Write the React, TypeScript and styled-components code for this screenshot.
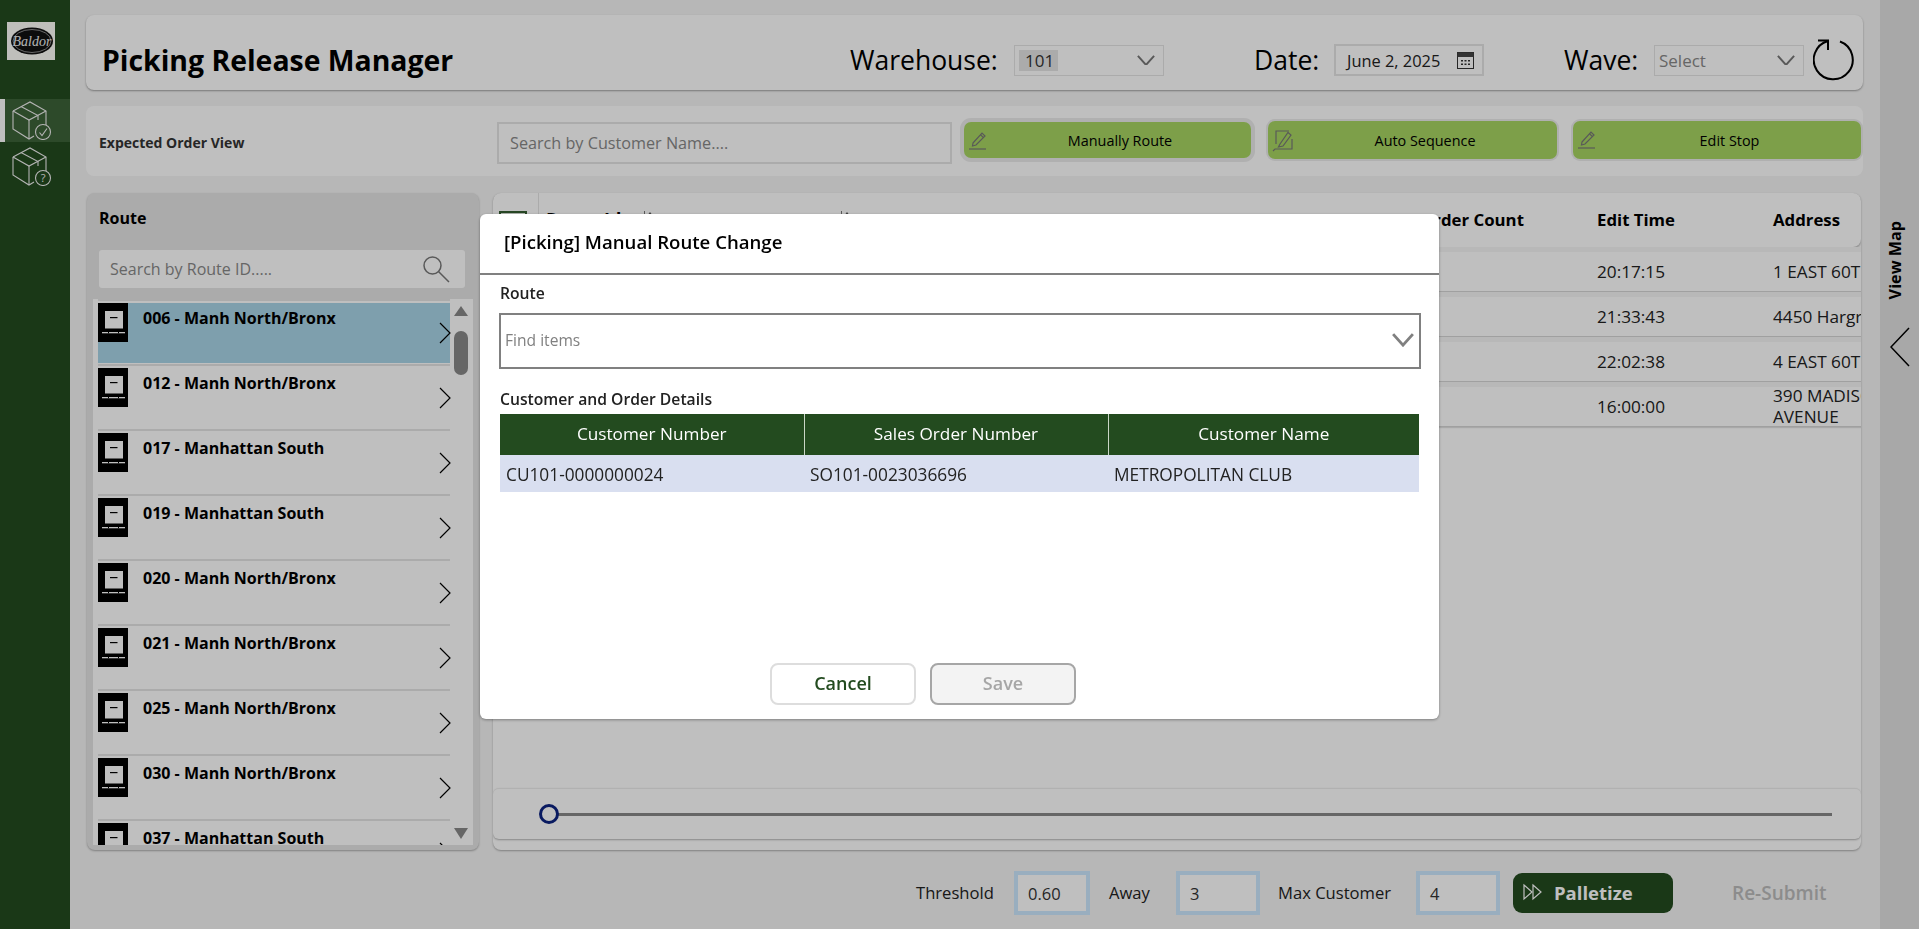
import React from 'react';
import styled, { createGlobalStyle } from 'styled-components';

const GlobalStyle = createGlobalStyle`
  html, body {
    margin: 0;
    padding: 0;
    height: 100%;
    overflow: hidden;
    font-family: 'Open Sans', 'Liberation Sans', sans-serif;
  }
  * { box-sizing: border-box; }
`;

const routes = [
  '006 - Manh North/Bronx',
  '012 - Manh North/Bronx',
  '017 - Manhattan South',
  '019 - Manhattan South',
  '020 - Manh North/Bronx',
  '021 - Manh North/Bronx',
  '025 - Manh North/Bronx',
  '030 - Manh North/Bronx',
  '037 - Manhattan South',
];

const stops = [
  { time: '20:17:15', address: '1 EAST 60TH STREET' },
  { time: '21:33:43', address: '4450 Hargrove Road' },
  { time: '22:02:38', address: '4 EAST 60TH STREET' },
  { time: '16:00:00', address: '390 MADISON AVENUE' },
];

const BoxIcon = ({ badge }: { badge: 'check' | 'help' }) => (
  <svg width="42" height="40" viewBox="0 0 42 40" fill="none" stroke="#f0f0f0" strokeWidth="1.1">
    <path d="M1 11 L18 2 L34 11 V25" />
    <path d="M1 11 V29 L17 39 L22 36" />
    <path d="M1 11 L17 20 L34 11" />
    <path d="M17 20 V39" />
    <path d="M9 6.5 L26 15.5 V20" />
    <circle cx="31" cy="32" r="7.5" />
    {badge === 'check' ? (
      <path d="M27.5 32.5 L30 35.5 L35 28.5" />
    ) : (
      <text x="31" y="36" fontSize="11" textAnchor="middle" fill="#f0f0f0" stroke="none" fontFamily="'Open Sans', sans-serif">?</text>
    )}
  </svg>
);

const PalletIcon = () => (
  <svg width="30" height="39" viewBox="0 0 30 39">
    <rect width="30" height="39" fill="#000" />
    <rect x="7" y="8" width="18" height="17.5" fill="#fff" />
    <rect x="12" y="14" width="7.5" height="1.2" fill="#000" />
    <rect x="4" y="29" width="23" height="1.3" fill="#fff" />
    <rect x="10" y="29" width="1" height="1.3" fill="#000" />
    <rect x="20" y="29" width="1" height="1.3" fill="#000" />
  </svg>
);

const Chevron = ({ size = 14, color = '#777', weight = 2.2 }: { size?: number; color?: string; weight?: number }) => (
  <svg width={size} height={size * 0.6} viewBox="0 0 20 12" fill="none" stroke={color} strokeWidth={weight}>
    <path d="M1 1 L10 11 L19 1" />
  </svg>
);

const PencilIcon = () => (
  <svg width="20" height="20" viewBox="0 0 20 20" fill="none" stroke="#777" strokeWidth="1.2">
    <path d="M5 13 L14 3 L17 6 L8 15 L4.5 16 Z" />
    <path d="M12.5 4.8 L15.5 7.6" />
    <path d="M1 19 H18" />
  </svg>
);

const SequenceIcon = () => (
  <svg width="22" height="24" viewBox="0 0 22 24" fill="none" stroke="#777" strokeWidth="1.2">
    <path d="M4 15 V2 H17" />
    <path d="M8 15 L16 3.5 L19 6 L11 17 L6.5 18 Z" />
    <path d="M20 10 V20 H3 L1 22" />
  </svg>
);

const Page = styled.div`
  display: flex;
  width: 100vw;
  height: 100vh;
  background: #f4f4f4;
  overflow: hidden;
`;

const Sidebar = styled.aside`
  width: 70px;
  flex: none;
  background: #234b1f;
  padding-top: 22px;
`;

const LogoBox = styled.div`
  width: 48px;
  height: 38px;
  margin: 0 0 39px 7px;
  background: #fffffa;
`;

const NavItem = styled.div<{ $active?: boolean }>`
  height: 43px;
  padding-top: 1px;
  padding-left: ${p => (p.$active ? '7px' : '12px')};
  background: ${p => (p.$active ? '#3d6338' : 'transparent')};
  border-left: ${p => (p.$active ? '5px solid #ffffff' : 'none')};
  margin-bottom: ${p => (p.$active ? '3px' : '0')};
`;

const Main = styled.main`
  flex: 1;
  min-width: 0;
  padding: 15px 17px 0 16px;
`;

const Card = styled.section`
  background: #ffffff;
  border-radius: 8px;
`;

const HeaderCard = styled(Card)`
  display: flex;
  align-items: center;
  height: 75px;
  padding: 15px 0 0 16px;
  box-shadow: 0 1px 2px rgba(0, 0, 0, 0.35);
`;

const Title = styled.h1`
  width: 748px;
  margin: 0;
  font-size: 28.4px;
  line-height: 38px;
  font-weight: 700;
  color: #000;
`;

const FieldLabel = styled.span<{ $width: number }>`
  width: ${p => p.$width}px;
  font-size: 26.5px;
  font-weight: 500;
  color: #000;
`;

const SelectBox = styled.div<{ $gap: number }>`
  display: flex;
  align-items: center;
  justify-content: space-between;
  width: 150px;
  height: 31px;
  margin-right: ${p => p.$gap}px;
  padding: 0 8px 0 4px;
  border: 1px solid #e4e4e4;
  font-size: 17px;
  color: #888;
`;

const SelectedChip = styled.span`
  width: 39px;
  height: 21px;
  padding-left: 6px;
  line-height: 21px;
  background: #e4e4e4;
  color: #333;
`;

const DateBox = styled.div`
  display: flex;
  align-items: center;
  justify-content: space-between;
  width: 150px;
  height: 32px;
  margin-right: 80px;
  padding: 0 8px 0 11px;
  border: 2px solid #e4e4e4;
  font-size: 16.4px;
  color: #222;
`;

const ToolbarCard = styled(Card)`
  display: flex;
  align-items: center;
  height: 70px;
  margin-top: 16px;
  padding-left: 13px;
`;

const ToolbarTitle = styled.span`
  width: 398px;
  margin-top: 2px;
  font-size: 14px;
  font-weight: 700;
  color: #333;
`;

const CustomerSearch = styled.div`
  width: 455px;
  height: 42px;
  margin-top: 4px;
  padding-left: 11px;
  border: 2px solid #e4e4e4;
  font-size: 16.2px;
  line-height: 38px;
  color: #888;
`;

const ActionButton = styled.button<{ $ring: number; $left: number; $width: number; $height: number }>`
  position: relative;
  width: ${p => p.$width}px;
  height: ${p => p.$height}px;
  margin: -2px 0 0 ${p => p.$left}px;
  padding: 0 0 0 25px;
  background: #a7d562;
  border: none;
  border-radius: 7px;
  box-shadow: 0 0 0 ${p => p.$ring}px #ebebeb;
  font-family: inherit;
  font-size: 14.4px;
  font-weight: 500;
  color: #000;
  svg {
    position: absolute;
    left: 4px;
    top: 8px;
  }
`;

const ContentRow = styled.div`
  display: flex;
  gap: 14px;
  height: 657px;
  margin: 17px 2px 0 0;
`;

const RoutePanel = styled.section`
  width: 392px;
  margin-left: 1px;
  flex: none;
  background: #e4e4e4;
  border-radius: 8px;
  box-shadow: 0 1px 2px rgba(0, 0, 0, 0.3);
`;

const RouteTitle = styled.div`
  height: 57px;
  padding: 14px 0 0 12px;
  font-size: 16px;
  line-height: 22px;
  font-weight: 700;
  color: #000;
`;

const RouteSearch = styled.div`
  display: flex;
  align-items: center;
  justify-content: space-between;
  width: 366px;
  height: 38px;
  margin-left: 12px;
  padding: 0 15px 0 11px;
  background: #ffffff;
  border-radius: 3px;
  font-size: 16px;
  color: #888;
`;

const RouteListFrame = styled.div`
  display: flex;
  width: 380px;
  height: 546px;
  margin: 11px 0 0 6px;
  padding-left: 5px;
  background: #ffffff;
  overflow: hidden;
`;

const RouteList = styled.div`
  width: 352px;
  flex: none;
`;

const RouteItem = styled.div`
  padding-top: 2px;
  margin-bottom: 1px;
  border-top: 2px solid #e4e4e4;
`;

const RouteBody = styled.div<{ $active?: boolean }>`
  position: relative;
  display: flex;
  height: 60px;
  background: ${p => (p.$active ? '#a9d5e7' : 'transparent')};
  svg:first-child { flex: none; }
  > svg:last-child {
    position: absolute;
    right: -1px;
    top: 19px;
  }
`;

const RouteName = styled.span`
  margin: 4px 0 0 15px;
  font-size: 16px;
  line-height: 22px;
  font-weight: 700;
  color: #000;
`;

const ScrollTrack = styled.div`
  position: relative;
  width: 24px;
  flex: none;
`;

const ScrollArrow = styled.div<{ $down?: boolean }>`
  position: absolute;
  left: 4px;
  top: ${p => (p.$down ? '529px' : '7px')};
  width: 0;
  height: 0;
  border-left: 7.5px solid transparent;
  border-right: 7.5px solid transparent;
  border-bottom: ${p => (p.$down ? 'none' : '10px solid #888')};
  border-top: ${p => (p.$down ? '11px solid #888' : 'none')};
`;

const ScrollThumb = styled.div`
  position: absolute;
  left: 4px;
  top: 32px;
  width: 14px;
  height: 44px;
  border-radius: 7px;
  background: #888;
`;

const GridPanel = styled.section`
  position: relative;
  flex: 1;
  min-width: 0;
  background: #ffffff;
  border-radius: 8px;
  box-shadow: 0 1px 2px rgba(0, 0, 0, 0.3);
  overflow: hidden;
`;

const GridHeader = styled.div`
  position: relative;
  height: 54px;
  background: #ffffff;
  border-radius: 8px;
  box-shadow: 0 1px 3px rgba(0, 0, 0, 0.4);
  font-weight: 700;
  color: #000;
`;

const HeaderCheck = styled.div`
  position: absolute;
  left: 6px;
  top: 18px;
  width: 28px;
  height: 28px;
  border: 2px solid #345e30;
  background: #e9f0e8;
`;

const HeaderDivider = styled.div`
  position: absolute;
  left: 45px;
  top: 0;
  bottom: 0;
  width: 1px;
  background: #e4e4e4;
`;

const HeaderCell = styled.span<{ $left: number; $large?: boolean }>`
  position: absolute;
  left: ${p => p.$left}px;
  top: ${p => (p.$large ? '15px' : '16px')};
  font-size: ${p => (p.$large ? '18px' : '16.8px')};
  line-height: 22px;
  white-space: nowrap;
`;

const SortMark = styled.span<{ $left: number }>`
  position: absolute;
  left: ${p => p.$left}px;
  top: 18px;
  width: 8px;
  height: 10px;
  border-left: 1px solid #777;
  &::after {
    content: '';
    position: absolute;
    left: 2px;
    top: 1px;
    border-left: 3px solid transparent;
    border-right: 3px solid transparent;
    border-bottom: 4px solid #555;
  }
`;

const GridRow = styled.div`
  position: relative;
  height: 45px;
  border-top: 5px solid #f6f6f6;
  border-bottom: 1px solid #d6d6d6;
  box-shadow: 0 1px 1px rgba(0, 0, 0, 0.12);
  font-size: 17.2px;
  color: #222;
`;

const TimeCell = styled.span`
  position: absolute;
  left: 1104px;
  top: 9px;
  line-height: 22px;
`;

const AddressCell = styled.span<{ $wrapped?: boolean }>`
  position: absolute;
  left: 1280px;
  top: ${p => (p.$wrapped ? '-2px' : '9px')};
  width: 120px;
  line-height: ${p => (p.$wrapped ? '21px' : '22px')};
  white-space: ${p => (p.$wrapped ? 'normal' : 'nowrap')};
`;

const SliderPanel = styled.div`
  position: absolute;
  left: 0;
  right: 0;
  top: 595px;
  height: 51px;
  background: #ffffff;
  border-top: 1px solid #ececec;
  border-radius: 6px;
  box-shadow: 0 1px 2px rgba(0, 0, 0, 0.3);
`;

const SliderTrack = styled.div`
  position: absolute;
  left: 55px;
  right: 29px;
  top: 24px;
  height: 3px;
  background: #888;
`;

const SliderThumb = styled.div`
  position: absolute;
  left: 46px;
  top: 15px;
  width: 20px;
  height: 20px;
  border: 3px solid #0d2380;
  border-radius: 50%;
  background: #ffffff;
`;

const BottomBar = styled.div`
  display: flex;
  align-items: center;
  height: 44px;
  margin-top: 21px;
  padding-left: 830px;
  color: #222;
`;

const BottomLabel = styled.span<{ $left?: number; $width: number }>`
  width: ${p => p.$width}px;
  margin: -2px 0 0 ${p => p.$left ?? 0}px;
  font-size: 16.6px;
  font-weight: 500;
`;

const NumberBox = styled.div<{ $width: number }>`
  width: ${p => p.$width}px;
  height: 44px;
  padding-left: 10px;
  border: 4px solid #cde9ff;
  background: #ffffff;
  font-size: 16.5px;
  line-height: 38px;
  color: #333;
`;

const PalletizeButton = styled.button`
  display: flex;
  align-items: center;
  width: 160px;
  height: 40px;
  margin-left: 13px;
  padding: 0 0 2px 10px;
  background: #234b1f;
  border: none;
  border-radius: 9px;
  font-family: inherit;
  font-size: 18.5px;
  font-weight: 700;
  color: #ffffff;
  svg { margin-right: 11px; }
`;

const ResubmitButton = styled.button`
  margin-left: 59px;
  padding: 0;
  background: none;
  border: none;
  font-family: inherit;
  font-size: 19px;
  font-weight: 600;
  color: #bbb;
`;

const MapStrip = styled.aside`
  display: flex;
  flex-direction: column;
  align-items: center;
  width: 39px;
  flex: none;
  padding-top: 221px;
  background: #e1e1e1;
`;

const MapLabel = styled.span`
  margin-right: 10px;
  writing-mode: vertical-rl;
  transform: rotate(180deg);
  font-size: 16.2px;
  line-height: 20px;
  font-weight: 700;
  color: #000;
`;

const MapArrow = styled.div`
  margin: 28px 0 0 1px;
`;

const Overlay = styled.div`
  position: fixed;
  inset: 0;
  background: rgba(0, 0, 0, 0.25);
`;

const Modal = styled.div`
  position: fixed;
  left: 480px;
  top: 214px;
  width: 959px;
  height: 505px;
  background: #ffffff;
  border-radius: 6px;
  box-shadow: 0 1px 3px rgba(0, 0, 0, 0.35);
`;

const ModalTitle = styled.div`
  height: 61px;
  padding: 16px 0 0 24px;
  border-bottom: 2px solid #808080;
  font-size: 18.6px;
  line-height: 24px;
  font-weight: 600;
  color: #000;
`;

const ModalLabel = styled.div<{ $top: number }>`
  margin: ${p => p.$top}px 0 0 20px;
  font-size: 15.7px;
  line-height: 22px;
  font-weight: 600;
  color: #222;
`;

const RouteCombo = styled.div`
  display: flex;
  align-items: center;
  justify-content: space-between;
  width: 922px;
  height: 56px;
  margin: 9px 0 0 19px;
  padding: 0 5px 2px 4px;
  border: 2px solid #808080;
  font-size: 15.6px;
  color: #808080;
`;

const DetailsTable = styled.table`
  width: 919px;
  margin: 4px 0 0 20px;
  border-collapse: collapse;
  table-layout: fixed;
  font-size: 17.3px;
  th {
    height: 41px;
    padding: 0 0 2px;
    background: #234b1f;
    border-right: 1px solid #c9d6c6;
    font-size: 17.2px;
    font-weight: 500;
    color: #ffffff;
  }
  th:nth-child(1), th:nth-child(2) { width: 304px; }
  th:last-child { border-right: none; }
  td {
    height: 37px;
    padding: 2px 0 0 6px;
    background: #d9dff0;
    color: #222;
  }
`;

const ModalActions = styled.div`
  position: absolute;
  left: 290px;
  top: 449px;
  display: flex;
  gap: 14px;
`;

const ModalButton = styled.button<{ $disabled?: boolean }>`
  width: 146px;
  height: 42px;
  padding: 0 0 3px;
  background: ${p => (p.$disabled ? '#f3f3f3' : '#ffffff')};
  border: 2px solid ${p => (p.$disabled ? '#a6a6a6' : '#dddddd')};
  border-radius: 8px;
  font-family: inherit;
  font-size: 18px;
  font-weight: 600;
  color: ${p => (p.$disabled ? '#a6a6a6' : '#234b1f')};
`;

const App = () => {
  return (
    <>
      <GlobalStyle />
      <Page>
        <Sidebar>
          <LogoBox>
            <svg width="48" height="38" viewBox="0 0 48 38">
              <ellipse cx="25" cy="19" rx="21" ry="13.5" fill="#111" />
              <ellipse cx="25" cy="19" rx="19" ry="11.5" fill="none" stroke="#ddd" strokeWidth="0.6" />
              <text x="25" y="23.5" textAnchor="middle" fontSize="14" fontStyle="italic" fill="#eee" fontFamily="'Liberation Serif', serif">Baldor</text>
            </svg>
          </LogoBox>
          <NavItem $active><BoxIcon badge="check" /></NavItem>
          <NavItem><BoxIcon badge="help" /></NavItem>
        </Sidebar>

        <Main>
          <HeaderCard>
            <Title>Picking Release Manager</Title>
            <FieldLabel $width={164}>Warehouse:</FieldLabel>
            <SelectBox $gap={90}>
              <SelectedChip>101</SelectedChip>
              <Chevron size={18} />
            </SelectBox>
            <FieldLabel $width={80}>Date:</FieldLabel>
            <DateBox>
              June 2, 2025
              <svg width="17" height="17" viewBox="0 0 17 17">
                <rect x="0.5" y="0.5" width="16" height="16" fill="none" stroke="#333" />
                <rect x="0.5" y="0.5" width="16" height="4.5" fill="#444" />
                <path d="M4 8h2v1.5H4zM7.5 8h2v1.5h-2zM11 8h2v1.5h-2zM4 11.5h2V13H4zM7.5 11.5h2V13h-2zM11 11.5h2V13h-2z" fill="#333" />
              </svg>
            </DateBox>
            <FieldLabel $width={90}>Wave:</FieldLabel>
            <SelectBox $gap={9}>
              Select
              <Chevron size={18} />
            </SelectBox>
            <svg width="42" height="42" viewBox="0 0 42 42" fill="none" stroke="#000" strokeWidth="2">
              <path d="M15 2 A19.5 19.5 0 1 0 27 2.5" />
              <path d="M5 1.5 H15 V11" />
            </svg>
          </HeaderCard>

          <ToolbarCard>
            <ToolbarTitle>Expected Order View</ToolbarTitle>
            <CustomerSearch>Search by Customer Name....</CustomerSearch>
            <ActionButton $ring={4} $left={12} $width={287} $height={36}><PencilIcon />Manually Route</ActionButton>
            <ActionButton $ring={2} $left={17} $width={289} $height={38}><SequenceIcon />Auto Sequence</ActionButton>
            <ActionButton $ring={2} $left={16} $width={288} $height={38}><PencilIcon />Edit Stop</ActionButton>
          </ToolbarCard>

          <ContentRow>
            <RoutePanel>
              <RouteTitle>Route</RouteTitle>
              <RouteSearch>
                Search by Route ID.....
                <svg width="28" height="28" viewBox="0 0 28 28" fill="none" stroke="#777" strokeWidth="1.5">
                  <circle cx="10.5" cy="10.5" r="8.5" />
                  <path d="M16.5 16.5 L27 27" />
                </svg>
              </RouteSearch>
              <RouteListFrame>
                <RouteList>
                  {routes.map((name, i) => (
                    <RouteItem key={name}>
                      <RouteBody $active={i === 0}>
                        <PalletIcon />
                        <RouteName>{name}</RouteName>
                        <svg width="12" height="22" viewBox="0 0 12 22" fill="none" stroke="#000" strokeWidth="1.2">
                          <path d="M1 1 L11 11 L1 21" />
                        </svg>
                      </RouteBody>
                    </RouteItem>
                  ))}
                </RouteList>
                <ScrollTrack>
                  <ScrollArrow />
                  <ScrollThumb />
                  <ScrollArrow $down />
                </ScrollTrack>
              </RouteListFrame>
            </RoutePanel>

            <GridPanel>
              <GridHeader>
                <HeaderCheck />
                <HeaderDivider />
                <HeaderCell $left={53} $large>Route Id</HeaderCell>
                <SortMark $left={151} />
                <SortMark $left={348} />
                <HeaderCell $left={927}>Order Count</HeaderCell>
                <HeaderCell $left={1104}>Edit Time</HeaderCell>
                <HeaderCell $left={1280}>Address</HeaderCell>
              </GridHeader>
              {stops.map((stop, i) => (
                <GridRow key={stop.time}>
                  <TimeCell>{stop.time}</TimeCell>
                  <AddressCell $wrapped={i === 3}>{stop.address}</AddressCell>
                </GridRow>
              ))}
              <SliderPanel>
                <SliderTrack />
                <SliderThumb />
              </SliderPanel>
            </GridPanel>
          </ContentRow>

          <BottomBar>
            <BottomLabel $width={98}>Threshold</BottomLabel>
            <NumberBox $width={76}>0.60</NumberBox>
            <BottomLabel $left={19} $width={67}>Away</BottomLabel>
            <NumberBox $width={84}>3</NumberBox>
            <BottomLabel $left={18} $width={138}>Max Customer</BottomLabel>
            <NumberBox $width={84}>4</NumberBox>
            <PalletizeButton>
              <svg width="20" height="18" viewBox="0 0 20 18" fill="none" stroke="#fff" strokeWidth="1.2">
                <path d="M1 2 L9 9 L1 16 Z" />
                <path d="M10 2 L18 9 L10 16 Z" />
              </svg>
              Palletize
            </PalletizeButton>
            <ResubmitButton>Re-Submit</ResubmitButton>
          </BottomBar>
        </Main>

        <MapStrip>
          <MapLabel>View Map</MapLabel>
          <MapArrow>
            <svg width="20" height="40" viewBox="0 0 20 40" fill="none" stroke="#000" strokeWidth="1.5">
              <path d="M19 1 L1 20 L19 39" />
            </svg>
          </MapArrow>
        </MapStrip>
      </Page>

      <Overlay />

      <Modal>
        <ModalTitle>[Picking] Manual Route Change</ModalTitle>
        <ModalLabel $top={7}>Route</ModalLabel>
        <RouteCombo>
          Find items
          <Chevron size={22} color="#808080" weight={2.6} />
        </RouteCombo>
        <ModalLabel $top={19}>Customer and Order Details</ModalLabel>
        <DetailsTable>
          <thead>
            <tr>
              <th>Customer Number</th>
              <th>Sales Order Number</th>
              <th>Customer Name</th>
            </tr>
          </thead>
          <tbody>
            <tr>
              <td>CU101-0000000024</td>
              <td>SO101-0023036696</td>
              <td>METROPOLITAN CLUB</td>
            </tr>
          </tbody>
        </DetailsTable>
        <ModalActions>
          <ModalButton>Cancel</ModalButton>
          <ModalButton $disabled>Save</ModalButton>
        </ModalActions>
      </Modal>
    </>
  );
};

export default App;
